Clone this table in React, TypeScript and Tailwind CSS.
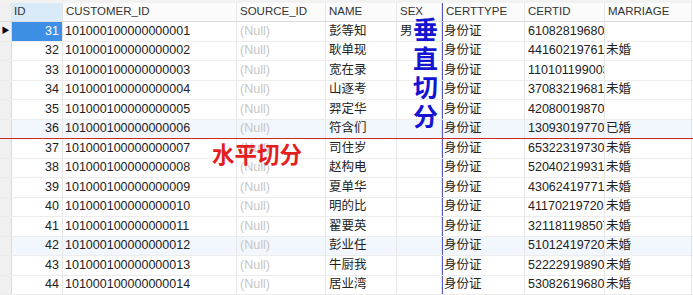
import React from "react";

const rows = [
  { id: 31, name: "彭等知", sex: "男", cert: "610828196809150012", mar: "" },
  { id: 32, name: "耿单现", sex: "", cert: "441602197612230021", mar: "未婚" },
  { id: 33, name: "宽在录", sex: "", cert: "110101199003070034", mar: "" },
  { id: 34, name: "山逐考", sex: "", cert: "370832196810110045", mar: "未婚" },
  { id: 35, name: "羿定华", sex: "", cert: "420800198707210056", mar: "" },
  { id: 36, name: "符含们", sex: "", cert: "130930197703180067", mar: "已婚" },
  { id: 37, name: "司住岁", sex: "", cert: "653223197302120078", mar: "未婚" },
  { id: 38, name: "赵构电", sex: "", cert: "520402199311050089", mar: "未婚" },
  { id: 39, name: "夏单华", sex: "", cert: "430624197711260090", mar: "未婚" },
  { id: 40, name: "明的比", sex: "", cert: "411702197209140101", mar: "未婚" },
  { id: 41, name: "翟要英", sex: "", cert: "321181198507030112", mar: "未婚" },
  { id: 42, name: "彭业任", sex: "", cert: "510124197209280123", mar: "未婚" },
  { id: 43, name: "牛厨我", sex: "", cert: "522229198903160134", mar: "未婚" },
  { id: 44, name: "居业湾", sex: "", cert: "530826196803090145", mar: "未婚" },
];

const cols =
  "grid grid-cols-[12px_51px_174px_89px_71px_45px_83px_80px_87px_1fr]";

const font = {
  fontFamily: '"Liberation Sans", "Noto Sans CJK SC", sans-serif',
};

const Cell = ({ className = "", children }: { className?: string; children?: React.ReactNode }) => (
  <div
    className={`border-r border-[#e6e6e6] overflow-hidden whitespace-nowrap flex items-center ${className}`}
  >
    {children}
  </div>
);

export default function App() {
  return (
    <div className="relative w-[693px] h-[295px] bg-white overflow-hidden text-[#222]" style={font}>
      {/* header */}
      <div className="h-[3px] bg-[#f2f2f2]" />
      <div className={`${cols} h-[19px] text-[11.5px] text-[#333] border-b border-[#dcdcdc] bg-[#fbfbfb]`}>
        <Cell className="bg-[#f0f0f0]" />
        <Cell className="bg-[#d9eaf9] pl-[2px]">ID</Cell>
        <Cell className="pl-[3px]">CUSTOMER_ID</Cell>
        <Cell className="pl-[3px]">SOURCE_ID</Cell>
        <Cell className="pl-[3px]">NAME</Cell>
        <Cell className="pl-[3px]">SEX</Cell>
        <Cell className="pl-[3px] border-l border-l-[#5858c4]">CERTTYPE</Cell>
        <Cell className="pl-[3px]">CERTID</Cell>
        <Cell className="pl-[3px]">MARRIAGE</Cell>
        <div />
      </div>

      {/* body */}
      {rows.map((r) => {
        const hl = r.id === 36 || r.id === 42;
        return (
          <div
            key={r.id}
            className={`${cols} h-[19.5px] text-[12.5px] border-b ${
              r.id === 36 ? "border-b-[#d02828]" : "border-b-[#ececec]"
            } ${hl ? "bg-[#f2f7fd]" : "bg-white"}`}
          >
            <Cell className="bg-[#f0f0f0] border-r-[#dadada] justify-center text-[8px] text-black">
              {r.id === 31 ? "▶" : ""}
            </Cell>
            <Cell
              className={`justify-end pr-[3px] ${
                r.id === 31 ? "bg-[#3d8fe6] text-white" : ""
              }`}
            >
              {r.id}
            </Cell>
            <Cell className="pl-[2px]">1010001000000000{String(r.id - 30).padStart(2, "0")}</Cell>
            <Cell className="pl-[3px] text-[#c6c6c6]">(Null)</Cell>
            <Cell className="pl-[3px]">{r.name}</Cell>
            <Cell className="pl-[3px]">{r.sex}</Cell>
            <Cell className="pl-[1px] border-l border-l-[#5858c4]">身份证</Cell>
            <Cell className="pl-[3px]">{r.cert}</Cell>
            <Cell className="pl-[1px]">{r.mar}</Cell>
            <div />
          </div>
        );
      })}

      {/* annotations */}
      <div
        className="absolute left-[413px] top-[14px] flex flex-col items-center text-[25px] leading-[29px] font-bold text-[#1414d2]"
        style={{ fontFamily: '"Noto Sans CJK SC", sans-serif' }}
      >
        <span>垂</span>
        <span>直</span>
        <span>切</span>
        <span>分</span>
      </div>
      <div
        className="absolute left-[212px] top-[138px] text-[22.5px] leading-[30px] font-bold text-[#e41e1e]"
        style={{ fontFamily: '"Noto Sans CJK SC", sans-serif' }}
      >
        水平切分
      </div>
    </div>
  );
}
